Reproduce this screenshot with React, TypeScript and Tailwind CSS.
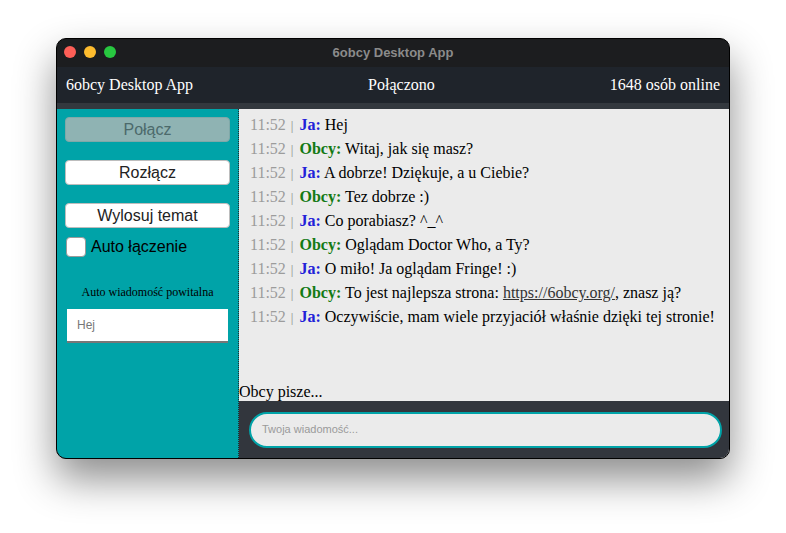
const MESSAGES: { who: "ja" | "obcy"; text: React.ReactNode }[] = [
  { who: "ja", text: "Hej" },
  { who: "obcy", text: "Witaj, jak się masz?" },
  { who: "ja", text: "A dobrze! Dziękuje, a u Ciebie?" },
  { who: "obcy", text: "Tez dobrze :)" },
  { who: "ja", text: "Co porabiasz? ^_^" },
  { who: "obcy", text: "Oglądam Doctor Who, a Ty?" },
  { who: "ja", text: "O miło! Ja oglądam Fringe! :)" },
  {
    who: "obcy",
    text: (
      <>
        To jest najlepsza strona:{" "}
        <span className="underline text-[#333]">https://6obcy.org/</span>, znasz ją?
      </>
    ),
  },
  { who: "ja", text: "Oczywiście, mam wiele przyjaciół właśnie dzięki tej stronie!" },
];

export default function App() {
  return (
    <div className="w-[786px] h-[533px] bg-white pt-[38px] pl-[56px] overflow-hidden">
      <div className="w-[674px] h-[421px] rounded-[10px] border border-black bg-[#1c1d1f] overflow-hidden flex flex-col shadow-[0_20px_40px_rgba(0,0,0,0.45)]">
        {/* title bar */}
        <div className="h-[28px] relative flex items-center justify-center shrink-0">
          <div className="absolute left-[7px] top-[7px] flex gap-[8px]">
            <span className="w-[12px] h-[12px] rounded-full bg-[#fe5f57]" />
            <span className="w-[12px] h-[12px] rounded-full bg-[#febc2e]" />
            <span className="w-[12px] h-[12px] rounded-full bg-[#28c840]" />
          </div>
          <span className="text-[13px] font-bold text-[#8b8b8b] font-['Liberation_Sans',sans-serif]">
            6obcy Desktop App
          </span>
        </div>

        {/* header */}
        <div className="h-[36px] bg-[#1f242b] flex items-center justify-between px-[9px] text-white text-[16px] font-['Liberation_Serif',serif] shrink-0">
          <span>6obcy Desktop App</span>
          <span>Połączono</span>
          <span>1648 osób online</span>
        </div>
        <div className="h-[6px] bg-[#33383e] shrink-0" />

        <div className="flex flex-1 min-h-0">
          {/* sidebar */}
          <div className="w-[182px] bg-[#00a3a8] border-r border-dotted border-[#1e2a30] flex flex-col px-[8px] pt-[8px] font-['Liberation_Sans',sans-serif]">
            <button className="h-[25px] rounded-[4px] bg-[#8fb3b3] border border-[#7fa8a8] text-[#4c6a6b] text-[16px]">
              Połącz
            </button>
            <button className="mt-[18px] h-[25px] rounded-[4px] bg-white border border-[#bdbdbd] text-[#222] text-[16px]">
              Rozłącz
            </button>
            <button className="mt-[18px] h-[25px] rounded-[4px] bg-white border border-[#bdbdbd] text-[#222] text-[16px]">
              Wylosuj temat
            </button>
            <label className="mt-[7px] flex items-center gap-[5px] pl-[1px]">
              <span className="w-[20px] h-[20px] rounded-[4px] bg-white border border-[#9a9a9a]" />
              <span className="text-[16px] text-black">Auto łączenie</span>
            </label>
            <p className="mt-[24px] text-center text-[12px] text-black font-['Liberation_Serif',serif]">
              Auto wiadomość powitalna
            </p>
            <div className="mt-[8px] mx-[2px] h-[34px] bg-white border-b-2 border-[#777] flex items-center px-[10px] text-[12px] text-[#777]">
              Hej
            </div>
          </div>

          {/* chat */}
          <div className="flex-1 flex flex-col bg-[#ebebeb]">
            <div className="flex-1 pt-[4px] px-[11px] font-['Liberation_Serif',serif] text-[16px] leading-[24px] text-black">
              {MESSAGES.map((m, i) => (
                <div key={i} className="whitespace-nowrap h-[24px]">
                  <span className="text-[#9c9c9c]">11:52</span>
                  <span className="text-[#8a8a8a] text-[13px] leading-none pl-[5px] pr-[6px]">|</span>
                  {m.who === "ja" ? (
                    <span className="font-bold text-[#2121d8]">Ja:</span>
                  ) : (
                    <span className="font-bold text-[#147a14]">Obcy:</span>
                  )}{" "}
                  {m.text}
                </div>
              ))}
            </div>
            <div className="font-['Liberation_Serif',serif] text-[16px] leading-[18px] text-black">
              Obcy pisze...
            </div>
            <div className="h-[57px] bg-[#32363d] flex items-center pl-[10px] pr-[7px]">
              <div className="w-full h-[36px] rounded-full border-2 border-[#00a3a8] bg-[#ebebeb] flex items-center px-[11px] text-[11px] text-[#9a9a9a] font-['Liberation_Sans',sans-serif]">
                Twoja wiadomość...
              </div>
            </div>
          </div>
        </div>
      </div>
    </div>
  );
}
